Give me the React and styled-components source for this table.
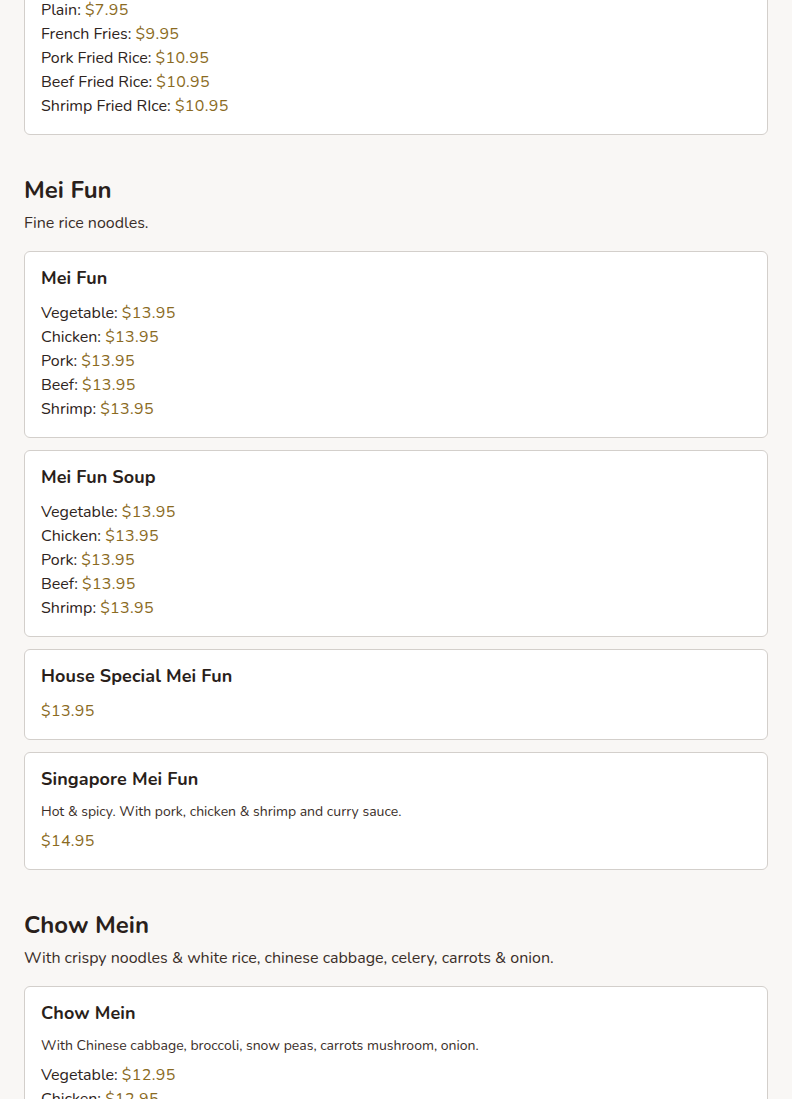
import React from "react";
import styled, { createGlobalStyle } from "styled-components";

const Global = createGlobalStyle`
  html, body { margin: 0; padding: 0; background: #f9f7f5; }
  body { font-family: "Nunito", "Lato", "Noto Sans", sans-serif; color: #2e2420; }
`;

const Page = styled.main`
  padding: 0 24px 40px;
  margin-top: -19px;
`;

const Section = styled.section`
  & + & { margin-top: 39px; }
`;

const SectionTitle = styled.h2`
  margin: 0;
  font-size: 24px;
  line-height: 32px;
  font-weight: 700;
  color: #2a1f1b;
`;

const SectionDesc = styled.p`
  margin: 5px 0 0;
  font-size: 16px;
  line-height: 24px;
  color: #3a2e28;
`;

const CardList = styled.div`
  display: flex;
  flex-direction: column;
  gap: 12px;
  margin-top: ${(p) => (p.$flush ? 0 : 16)}px;
`;

const Card = styled.article`
  background: #fff;
  border: 1px solid #d3cfcb;
  border-radius: 6px;
  padding: 16px;
`;

const CardTitle = styled.h3`
  margin: 0 0 13px;
  font-size: 18px;
  line-height: 20px;
  font-weight: 700;
  letter-spacing: 0.1px;
  color: #2a1f1b;
`;

const CardDesc = styled.p`
  margin: 0 0 7px;
  font-size: 14px;
  line-height: 20px;
  color: #3a2e28;
`;

const Line = styled.div`
  font-size: 16px;
  line-height: 24px;
  color: #2e2420;
`;

const Price = styled.span`
  color: #8a6a22;
  letter-spacing: 0.35px;
`;

const Item = ({ title, desc, prices }) => (
  <Card>
    {title && <CardTitle>{title}</CardTitle>}
    {desc && <CardDesc>{desc}</CardDesc>}
    {prices.map(([label, price], i) => (
      <Line key={i}>
        {label ? `${label}: ` : ""}
        <Price>{price}</Price>
      </Line>
    ))}
  </Card>
);

const meatPrices = (p) => [
  ["Vegetable", p],
  ["Chicken", p],
  ["Pork", p],
  ["Beef", p],
  ["Shrimp", p],
];

export default function App() {
  return (
    <>
      <Global />
      <Page>
        <Section>
          <CardList $flush>
            <Item
              prices={[
                ["Plain", "$7.95"],
                ["French Fries", "$9.95"],
                ["Pork Fried Rice", "$10.95"],
                ["Beef Fried Rice", "$10.95"],
                ["Shrimp Fried RIce", "$10.95"],
              ]}
            />
          </CardList>
        </Section>
        <Section>
          <SectionTitle>Mei Fun</SectionTitle>
          <SectionDesc>Fine rice noodles.</SectionDesc>
          <CardList>
            <Item title="Mei Fun" prices={meatPrices("$13.95")} />
            <Item title="Mei Fun Soup" prices={meatPrices("$13.95")} />
            <Item title="House Special Mei Fun" prices={[["", "$13.95"]]} />
            <Item
              title="Singapore Mei Fun"
              desc="Hot & spicy. With pork, chicken & shrimp and curry sauce."
              prices={[["", "$14.95"]]}
            />
          </CardList>
        </Section>
        <Section>
          <SectionTitle>Chow Mein</SectionTitle>
          <SectionDesc>
            With crispy noodles &amp; white rice, chinese cabbage, celery, carrots &amp; onion.
          </SectionDesc>
          <CardList>
            <Item
              title="Chow Mein"
              desc="With Chinese cabbage, broccoli, snow peas, carrots mushroom, onion."
              prices={meatPrices("$12.95")}
            />
          </CardList>
        </Section>
      </Page>
    </>
  );
}
